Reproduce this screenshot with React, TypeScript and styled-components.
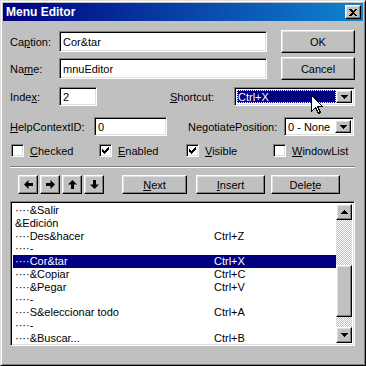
import React from 'react';
import styled, { createGlobalStyle, css } from 'styled-components';

const GlobalStyle = createGlobalStyle`
  html, body {
    margin: 0;
    padding: 0;
    background: #c0c0c0;
  }
  body {
    font-family: "Liberation Sans", Arial, sans-serif;
    font-size: 11px;
    color: #000;
  }
`;

// classic 3d edges
const raised = css`
  box-sizing: border-box;
  border: 1px solid;
  border-color: #fff #000 #000 #fff;
  box-shadow: inset -1px -1px #808080, inset 1px 1px #dfdfdf;
  background: #c0c0c0;
`;

const sunken = css`
  box-sizing: border-box;
  border: 1px solid;
  border-color: #808080 #fff #fff #808080;
  box-shadow: inset 1px 1px #000, inset -1px -1px #dfdfdf;
  background: #fff;
`;

const Window = styled.div`
  position: relative;
  box-sizing: border-box;
  width: 366px;
  height: 366px;
  padding: 2px;
  border: 1px solid;
  border-color: #dfdfdf #000 #000 #dfdfdf;
  box-shadow: inset 1px 1px #fff, inset -1px -1px #808080;
  background: #c0c0c0;
`;

const TitleBar = styled.div`
  height: 18px;
  display: flex;
  align-items: center;
  justify-content: space-between;
  padding-left: 3px;
  background: linear-gradient(90deg, #000080, #1084d0);
  color: #fff;
  font-weight: bold;
  font-size: 12px;
`;

const CloseButton = styled.div`
  ${raised};
  width: 16px;
  height: 14px;
  margin-right: 2px;
  display: flex;
  align-items: center;
  justify-content: center;
`;

const Body = styled.div`
  display: flex;
  flex-direction: column;
  padding: 9px 8px 0 7px;
`;

const Row = styled.div<{ $mt: number; $h: number }>`
  display: flex;
  align-items: center;
  margin-top: ${(p) => p.$mt}px;
  height: ${(p) => p.$h}px;
`;

const Label = styled.span<{ $w: number; $ml?: number }>`
  flex-shrink: 0;
  width: ${(p) => p.$w}px;
  margin-left: ${(p) => p.$ml || 0}px;
  white-space: nowrap;
`;

const TextBox = styled.div<{ $w: number; $h: number }>`
  ${sunken};
  flex-shrink: 0;
  width: ${(p) => p.$w}px;
  height: ${(p) => p.$h}px;
  display: flex;
  align-items: center;
  padding-left: 3px;
`;

const Button = styled.div<{ $w: number; $h: number; $ml?: number }>`
  ${raised};
  flex-shrink: 0;
  width: ${(p) => p.$w}px;
  height: ${(p) => p.$h}px;
  margin-left: ${(p) => p.$ml || 0}px;
  display: flex;
  align-items: center;
  justify-content: center;
`;

const Combo = styled.div<{ $w: number }>`
  ${sunken};
  flex-shrink: 0;
  width: ${(p) => p.$w}px;
  height: 19px;
  display: flex;
  padding: 2px;
`;

const ComboText = styled.div<{ $selected?: boolean }>`
  flex: 1;
  display: flex;
  align-items: center;
  padding-left: 1px;
  ${(p) =>
    p.$selected &&
    css`
      background: #000080;
      color: #fff;
      outline: 1px dotted #fff;
      outline-offset: -1px;
    `}
`;

const DropButton = styled.div`
  ${raised};
  width: 16px;
  display: flex;
  align-items: center;
  justify-content: center;
`;

const CheckRow = styled.div`
  display: grid;
  grid-template-columns: 88px 87px 87px 1fr;
  margin-top: 8px;
  padding-left: 1px;
  height: 13px;
`;

const CheckItem = styled.div`
  display: flex;
  align-items: center;
  gap: 6px;
`;

const CheckBox = styled.div`
  ${sunken};
  width: 13px;
  height: 13px;
  display: flex;
  align-items: center;
  justify-content: center;
`;

const Separator = styled.div`
  margin-top: 9px;
  height: 0;
  border-top: 1px solid #808080;
  border-bottom: 1px solid #fff;
`;

const ListBox = styled.div`
  ${sunken};
  margin-top: 7px;
  height: 145px;
  display: flex;
  padding: 2px;
`;

const Items = styled.div`
  flex: 1;
  overflow: hidden;
`;

const Item = styled.div<{ $selected?: boolean }>`
  display: flex;
  height: 12.75px;
  line-height: 12.75px;
  padding-left: 2px;
  white-space: nowrap;
  ${(p) =>
    p.$selected &&
    css`
      background: #000080;
      color: #fff;
    `}
`;

const ItemCaption = styled.span`
  width: 199px;
  flex-shrink: 0;
`;

const ScrollBar = styled.div`
  width: 16px;
  display: flex;
  flex-direction: column;
`;

const ScrollButton = styled.div`
  ${raised};
  height: 16px;
  flex-shrink: 0;
  display: flex;
  align-items: center;
  justify-content: center;
`;

const Track = styled.div`
  flex: 1;
  display: flex;
  flex-direction: column;
  background-color: #fff;
  background-image: conic-gradient(#c0c0c0 25%, #fff 0 50%, #c0c0c0 0 75%, #fff 0);
  background-size: 2px 2px;
`;

const Thumb = styled.div<{ $top: number; $h: number }>`
  ${raised};
  margin-top: ${(p) => p.$top}px;
  height: ${(p) => p.$h}px;
`;

const Pointer = styled.svg`
  position: absolute;
  left: 310px;
  top: 94px;
`;

const Tri = ({ dir }: { dir: 'up' | 'down' }) => (
  <svg width="7" height="4" viewBox="0 0 7 4" shapeRendering="crispEdges">
    <path d={dir === 'down' ? 'M0 0H7L3.5 4Z' : 'M3.5 0L7 4H0Z'} fill="#000" />
  </svg>
);

const arrowPaths: Record<string, string> = {
  left: 'M0 4.5L4.5 0V3H9V6H4.5V9Z',
  right: 'M9 4.5L4.5 0V3H0V6H4.5V9Z',
  up: 'M4.5 0L0 4.5H3V9H6V4.5H9Z',
  down: 'M4.5 9L0 4.5H3V0H6V4.5H9Z',
};

const Arrow = ({ dir }: { dir: string }) => (
  <svg width="9" height="9" viewBox="0 0 9 9">
    <path d={arrowPaths[dir]} fill="#000" />
  </svg>
);

const Check = () => (
  <svg width="7" height="7" viewBox="0 0 7 7" shapeRendering="crispEdges">
    <path d="M0 2H1V3H2V4H3V3H4V2H5V1H6V0H7V3H6V4H5V5H4V6H3V7H2V6H1V5H0Z" fill="#000" />
  </svg>
);

const items = [
  { t: '····&Salir', k: '' },
  { t: '&Edición', k: '' },
  { t: '····Des&hacer', k: 'Ctrl+Z' },
  { t: '····-', k: '' },
  { t: '····Cor&tar', k: 'Ctrl+X', sel: true },
  { t: '····&Copiar', k: 'Ctrl+C' },
  { t: '····&Pegar', k: 'Ctrl+V' },
  { t: '····-', k: '' },
  { t: '····S&eleccionar todo', k: 'Ctrl+A' },
  { t: '····-', k: '' },
  { t: '····&Buscar...', k: 'Ctrl+B' },
];

const App = () => {
  return (
    <>
      <GlobalStyle />
      <Window>
        <TitleBar>
          <span>Menu Editor</span>
          <CloseButton>
            <svg width="8" height="7" viewBox="0 0 8 7" shapeRendering="crispEdges">
              <path
                d="M0 0H2L4 2L6 0H8L5 3.5L8 7H6L4 5L2 7H0L3 3.5Z"
                fill="#000"
              />
            </svg>
          </CloseButton>
        </TitleBar>
        <Body>
          <Row $mt={0} $h={23}>
            <Label $w={49}>
              Ca<u>p</u>tion:
            </Label>
            <TextBox $w={208} $h={21}>Cor&amp;tar</TextBox>
            <Button $w={74} $h={23} $ml={14}>
              OK
            </Button>
          </Row>
          <Row $mt={4} $h={23}>
            <Label $w={49}>
              Na<u>m</u>e:
            </Label>
            <TextBox $w={208} $h={21}>mnuEditor</TextBox>
            <Button $w={74} $h={23} $ml={14}>
              Cancel
            </Button>
          </Row>
          <Row $mt={7} $h={19}>
            <Label $w={49}>
              Inde<u>x</u>:
            </Label>
            <TextBox $w={38} $h={19}>2</TextBox>
            <Label $w={64} $ml={73}>
              <u>S</u>hortcut:
            </Label>
            <Combo $w={121}>
              <ComboText $selected>Ctrl+X</ComboText>
              <DropButton>
                <Tri dir="down" />
              </DropButton>
            </Combo>
          </Row>
          <Row $mt={11} $h={19}>
            <Label $w={84}>
              <u>H</u>elpContextID:
            </Label>
            <TextBox $w={73} $h={19}>0</TextBox>
            <Label $w={96} $ml={21}>
              Ne<u>g</u>otiatePosition:
            </Label>
            <Combo $w={70}>
              <ComboText>0 - None</ComboText>
              <DropButton>
                <Tri dir="down" />
              </DropButton>
            </Combo>
          </Row>
          <CheckRow>
            <CheckItem>
              <CheckBox />
              <span>
                <u>C</u>hecked
              </span>
            </CheckItem>
            <CheckItem>
              <CheckBox>
                <Check />
              </CheckBox>
              <span>
                <u>E</u>nabled
              </span>
            </CheckItem>
            <CheckItem>
              <CheckBox>
                <Check />
              </CheckBox>
              <span>
                <u>V</u>isible
              </span>
            </CheckItem>
            <CheckItem>
              <CheckBox />
              <span>
                <u>W</u>indowList
              </span>
            </CheckItem>
          </CheckRow>
          <Separator />
          <Row $mt={7} $h={19}>
            <Button $w={20} $h={19} $ml={8}>
              <Arrow dir="left" />
            </Button>
            <Button $w={20} $h={19} $ml={2}>
              <Arrow dir="right" />
            </Button>
            <Button $w={20} $h={19} $ml={2}>
              <Arrow dir="up" />
            </Button>
            <Button $w={20} $h={19} $ml={2}>
              <Arrow dir="down" />
            </Button>
            <Button $w={65} $h={19} $ml={18}>
              <u>N</u>ext
            </Button>
            <Button $w={69} $h={19} $ml={9}>
              <u>I</u>nsert
            </Button>
            <Button $w={69} $h={19} $ml={6}>
              Dele<u>t</u>e
            </Button>
          </Row>
          <ListBox>
            <Items>
              {items.map((it, i) => (
                <Item key={i} $selected={it.sel}>
                  <ItemCaption>{it.t}</ItemCaption>
                  <span>{it.k}</span>
                </Item>
              ))}
            </Items>
            <ScrollBar>
              <ScrollButton>
                <Tri dir="up" />
              </ScrollButton>
              <Track>
                <Thumb $top={45} $h={52} />
              </Track>
              <ScrollButton>
                <Tri dir="down" />
              </ScrollButton>
            </ScrollBar>
          </ListBox>
        </Body>
        <Pointer width="12" height="19" viewBox="0 0 12 19" shapeRendering="crispEdges">
          <path
            d="M0.5 0.5V16.5L4.5 12.5L7.5 18.5L9.5 17.5L6.5 11.5H11.5Z"
            fill="#fff"
            stroke="#000"
            strokeWidth="1"
          />
        </Pointer>
      </Window>
    </>
  );
};

export default App;
